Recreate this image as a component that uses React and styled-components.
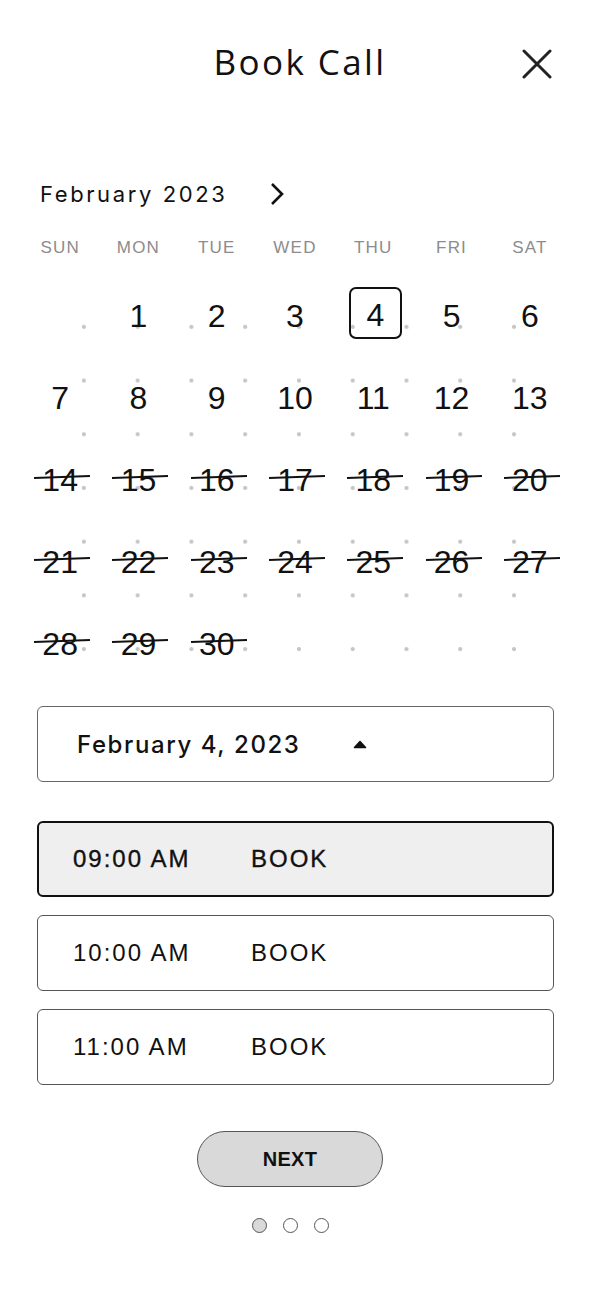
import React, { useState } from "react";
import styled, { createGlobalStyle, css } from "styled-components";

const GlobalStyle = createGlobalStyle`
  * { box-sizing: border-box; }
  body {
    margin: 0;
    background: #fff;
    color: #111;
    font-family: "Liberation Sans", Arial, sans-serif;
  }
`;

const weekdays = ["SUN", "MON", "TUE", "WED", "THU", "FRI", "SAT"];
const slots = ["09:00 AM", "10:00 AM", "11:00 AM"];

// the mock-up puts the 1st on a Monday
const buildDays = () => {
  const cells = [null];
  for (let d = 1; d <= 30; d++) cells.push(d);
  return cells;
};

const App = () => {
  const [selectedSlot, setSelectedSlot] = useState(0);
  const days = buildDays();

  return (
    <>
      <GlobalStyle />
      <Page>
        <Header>
          <span />
          <Title>Book Call</Title>
          <CloseButton aria-label="Close">
            <svg width="30" height="30" viewBox="0 0 30 30">
              <path
                d="M2 2 L28 28 M28 2 L2 28"
                stroke="#222"
                strokeWidth="3"
                strokeLinecap="round"
              />
            </svg>
          </CloseButton>
        </Header>

        <MonthRow>
          <MonthLabel>February 2023</MonthLabel>
          <NavButton aria-label="Next month">
            <svg width="16" height="24" viewBox="0 0 16 24">
              <path
                d="M3 2 L13 12 L3 22"
                fill="none"
                stroke="#111"
                strokeWidth="2.6"
              />
            </svg>
          </NavButton>
        </MonthRow>

        <Calendar>
          <WeekRow>
            {weekdays.map((w) => (
              <Weekday key={w}>{w}</Weekday>
            ))}
          </WeekRow>
          <DotField>
            <DaysGrid>
              {days.map((d, i) => (
                <DayCell key={i}>
                  {d && (
                    <DayNumber $selected={d === 4} $past={d >= 14}>
                      {d}
                    </DayNumber>
                  )}
                </DayCell>
              ))}
            </DaysGrid>
          </DotField>
        </Calendar>

        <Booking>
          <DateSelect>
            <DateText>February 4, 2023</DateText>
            <svg width="14" height="9" viewBox="0 0 14 9">
              <path
                d="M7 1.5 L12.5 7.5 L1.5 7.5 Z"
                fill="#111"
                stroke="#111"
                strokeWidth="1.6"
                strokeLinejoin="round"
              />
            </svg>
          </DateSelect>

          <SlotList>
            {slots.map((s, i) => (
              <Slot
                key={s}
                $active={i === selectedSlot}
                onClick={() => setSelectedSlot(i)}
              >
                <SlotTime>{s}</SlotTime>
                <span>BOOK</span>
              </Slot>
            ))}
          </SlotList>

          <Footer>
            <NextButton>NEXT</NextButton>
            <Steps>
              <Step $filled />
              <Step />
              <Step />
            </Steps>
          </Footer>
        </Booking>
      </Page>
    </>
  );
};

const Page = styled.div`
  width: 600px;
  padding: 38px 0 60px;
`;

const Header = styled.header`
  height: 44px;
  padding: 0 50px;
  display: grid;
  grid-template-columns: 1fr auto 1fr;
  align-items: center;
`;

const Title = styled.h1`
  margin: 0;
  font-family: "Open Sans", sans-serif;
  font-weight: 400;
  font-size: 35px;
  letter-spacing: 2.4px;
  color: #111;
`;

const CloseButton = styled.button`
  justify-self: end;
  width: 30px;
  height: 30px;
  margin: 4px -2px 0 0;
  padding: 0;
  border: none;
  background: none;
  display: flex;
`;

const MonthRow = styled.div`
  height: 30px;
  margin-top: 97px;
  padding-left: 40px;
  display: flex;
  align-items: center;
  gap: 42px;
`;

const MonthLabel = styled.h2`
  margin: 0;
  font-family: Inter, sans-serif;
  font-weight: 400;
  font-size: 22px;
  letter-spacing: 2.6px;
  color: #111;
`;

const NavButton = styled.button`
  padding: 0;
  border: none;
  background: none;
  display: flex;
`;

const Calendar = styled.section`
  width: 548px;
  margin: 29px 0 0 21px;
`;

const WeekRow = styled.div`
  height: 20px;
  display: grid;
  grid-template-columns: repeat(7, 1fr);
  align-items: center;
`;

const Weekday = styled.span`
  text-align: center;
  font-size: 17px;
  letter-spacing: 1.2px;
  color: #8c8c8c;
`;

const DotField = styled.div`
  display: flex;
  flex-direction: column;
  margin: 42px 28px 0 36px;
  height: 376px;
  background-image: radial-gradient(circle, #c6c6c6 1.8px, transparent 2.3px);
  background-size: calc(100% / 9) calc(100% / 7);
`;

const DaysGrid = styled.div`
  margin: -25px -28px -9px -36px;
  display: grid;
  grid-template-columns: repeat(7, 1fr);
  grid-auto-rows: 82px;
`;

const DayCell = styled.div`
  display: flex;
  align-items: center;
  justify-content: center;
`;

const DayNumber = styled.span`
  position: relative;
  display: flex;
  align-items: center;
  justify-content: center;
  font-size: 32px;
  color: #111;

  ${({ $selected }) =>
    $selected &&
    css`
      width: 53px;
      height: 52px;
      margin: -6px -4px 0 0;
      border: 2px solid #111;
      border-radius: 7px;
      padding-top: 4px;
    `}

  ${({ $past }) =>
    $past &&
    css`
      &::after {
        content: "";
        position: absolute;
        left: 50%;
        top: 50%;
        width: 56px;
        height: 1.6px;
        margin: -4px 0 0 -26px;
        background: #111;
        transform: rotate(-1.8deg);
      }
    `}
`;

const Booking = styled.section`
  width: 517px;
  margin: 30px 0 0 37px;
`;

const DateSelect = styled.button`
  width: 100%;
  height: 76px;
  padding: 0 0 0 39px;
  border: 1px solid #666;
  border-radius: 6px;
  background: #fff;
  display: flex;
  align-items: center;
  gap: 52px;
`;

const DateText = styled.span`
  font-family: Inter, sans-serif;
  font-weight: 500;
  font-size: 24px;
  letter-spacing: 1.6px;
  color: #111;
`;

const SlotList = styled.div`
  margin-top: 39px;
  display: flex;
  flex-direction: column;
  gap: 18px;
`;

const Slot = styled.button`
  height: 76px;
  padding: 0 0 0 35px;
  border: 1px solid #555;
  border-radius: 6px;
  background: #fff;
  display: flex;
  align-items: center;
  font-family: "Liberation Sans", Arial, sans-serif;
  font-size: 24px;
  letter-spacing: 2px;
  color: #111;
  cursor: pointer;

  ${({ $active }) =>
    $active &&
    css`
      padding-left: 34px;
      border: 2px solid #111;
      background: #efefef;
      -webkit-text-stroke: 0.35px #111;
    `}
`;

const SlotTime = styled.span`
  width: 178px;
  text-align: left;
`;

const Footer = styled.div`
  margin-top: 46px;
  display: flex;
  flex-direction: column;
  align-items: center;
  gap: 31px;
  padding-right: 11px;
`;

const NextButton = styled.button`
  width: 186px;
  height: 56px;
  border: 1px solid #555;
  border-radius: 28px;
  background: #d9d9d9;
  font-family: "Liberation Sans", Arial, sans-serif;
  font-weight: 700;
  font-size: 20px;
  letter-spacing: 0.3px;
  color: #111;
`;

const Steps = styled.div`
  display: flex;
  gap: 16px;
`;

const Step = styled.span`
  width: 15px;
  height: 15px;
  border-radius: 50%;
  border: 1px solid #555;
  background: ${({ $filled }) => ($filled ? "#d9d9d9" : "#fff")};
`;

export default App;
